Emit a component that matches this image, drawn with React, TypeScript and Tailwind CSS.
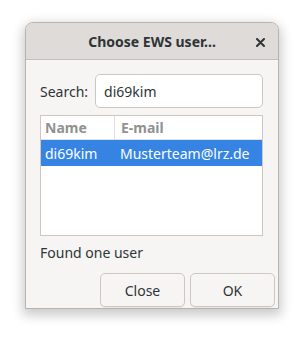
export default function App() {
  return (
    <div className="w-[304px] h-[338px] bg-white pt-[22px] pl-[25px] font-['Noto_Sans',sans-serif]">
      <div className="w-[254px] h-[287px] flex flex-col border border-[#b8b3ae] rounded-t-[8px] bg-[#f6f5f4] shadow-[0_4px_12px_2px_rgba(0,0,0,0.22)] overflow-hidden">
        <div className="h-[37px] shrink-0 flex items-center justify-center relative bg-[#dedbd8] border-b border-[#c4bfba]">
          <span className="text-[14px] font-bold text-[#2e3436]">Choose EWS user...</span>
          <svg className="absolute left-[230px] top-[15px]" width="9" height="9" viewBox="0 0 9 9">
            <path d="M1 1 L8 8 M8 1 L1 8" stroke="#2e3436" strokeWidth="2" strokeLinecap="round" />
          </svg>
        </div>
        <div className="flex-1 flex flex-col pl-[14px] pr-[15px]">
          <div className="flex items-center mt-[14px] gap-[7px]">
            <span className="text-[14px] text-[#2e3436]">Search:</span>
            <div className="flex-1 h-[34px] bg-white border border-[#cdc7c2] rounded-[5px] flex items-center px-[8px] text-[14px] text-[#2e3436]">
              di69kim
            </div>
          </div>
          <div className="mt-[7px] h-[121px] bg-white border border-[#cdc7c2] flex flex-col">
            <div className="h-[24px] flex text-[14px] font-bold text-[#919191] border-b border-[#e2e0dd]">
              <div className="w-[74px] border-r border-[#e2e0dd] pl-[4px] flex items-center">Name</div>
              <div className="pl-[6px] flex items-center">E-mail</div>
            </div>
            <div className="h-[26px] flex items-center bg-[#3584e4] text-white text-[14px]">
              <div className="w-[74px] pl-[4px]">di69kim</div>
              <div className="pl-[5px]">Musterteam@lrz.de</div>
            </div>
          </div>
          <div className="mt-[6px] text-[14px] text-[#2e3436]">Found one user</div>
          <div className="mt-auto mb-[1px] flex justify-end gap-[5px] -mr-[12px]">
            <button className="w-[85px] h-[34px] rounded-[5px] border border-[#cdc7c2] bg-[#f6f5f4] text-[14px] text-[#2e3436] shadow-[0_1px_0_rgba(0,0,0,0.05)]">Close</button>
            <button className="w-[85px] h-[34px] rounded-[5px] border border-[#cdc7c2] bg-[#f6f5f4] text-[14px] text-[#2e3436] shadow-[0_1px_0_rgba(0,0,0,0.05)]">OK</button>
          </div>
        </div>
      </div>
    </div>
  )
}
